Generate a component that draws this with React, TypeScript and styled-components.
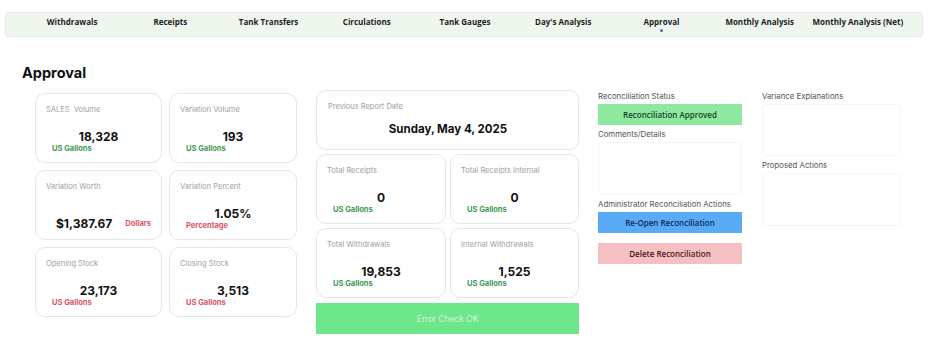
import React, { FC } from 'react'
import styled, { createGlobalStyle } from 'styled-components'

const GlobalStyle = createGlobalStyle`
  body {
    margin: 0;
    background: #fff;
    font-family: 'Inter', 'Liberation Sans', sans-serif;
  }
`

const tabs = [
  'Withdrawals',
  'Receipts',
  'Tank Transfers',
  'Circulations',
  'Tank Gauges',
  "Day's Analysis",
  'Approval',
  'Monthly Analysis',
  'Monthly Analysis (Net)',
]

type Tone = 'green' | 'red'

interface StatProps {
  label: string
  value: string
  unit: string
  tone: Tone
  inline?: boolean
}

const StatCard: FC<StatProps> = ({ label, value, unit, tone, inline }) => (
  <Card>
    <CardLabel>{label}</CardLabel>
    {inline ? (
      <InlineRow>
        <Value>{value}</Value>
        <Unit tone={tone}>{unit}</Unit>
      </InlineRow>
    ) : (
      <>
        <Value>{value}</Value>
        <Unit tone={tone}>{unit}</Unit>
      </>
    )}
  </Card>
)

const App: FC = () => {
  return (
    <Page>
      <GlobalStyle />
      <NavBar>
        {tabs.map((t) => (
          <Tab key={t} active={t === 'Approval'}>
            {t}
          </Tab>
        ))}
      </NavBar>

      <Title>Approval</Title>

      <Main>
        <LeftGrid>
          <StatCard label={'SALES\u00a0 Volume'} value="18,328" unit="US Gallons" tone="green" />
          <StatCard label="Variation Volume" value="193" unit="US Gallons" tone="green" />
          <StatCard label="Variation Worth" value="$1,387.67" unit="Dollars" tone="red" inline />
          <StatCard label="Variation Percent" value="1.05%" unit="Percentage" tone="red" />
          <StatCard label="Opening Stock" value="23,173" unit="US Gallons" tone="red" />
          <StatCard label="Closing Stock" value="3,513" unit="US Gallons" tone="red" />
        </LeftGrid>

        <MiddleCol>
          <DateCard>
            <CardLabel>Previous Report Date</CardLabel>
            <DateValue>Sunday, May 4, 2025</DateValue>
          </DateCard>
          <PairRow>
            <StatCard label="Total Receipts" value="0" unit="US Gallons" tone="green" />
            <StatCard label="Total Receipts Internal" value="0" unit="US Gallons" tone="green" />
          </PairRow>
          <PairRow>
            <StatCard label="Total Withdrawals" value="19,853" unit="US Gallons" tone="green" />
            <StatCard label="Internal Withdrawals" value="1,525" unit="US Gallons" tone="green" />
          </PairRow>
          <CheckBar>Error Check OK</CheckBar>
        </MiddleCol>

        <SideCol>
          <FieldLabel>Reconciliation Status</FieldLabel>
          <ActionBar kind="approved">Reconciliation Approved</ActionBar>
          <FieldLabel>Comments/Details</FieldLabel>
          <TextBox h={51} />
          <FieldLabel>Administrator Reconciliation Actions</FieldLabel>
          <ActionBar kind="reopen">Re-Open Reconciliation</ActionBar>
          <ActionBar kind="delete" spaced>Delete Reconciliation</ActionBar>
        </SideCol>

        <SideCol narrow>
          <FieldLabel>Variance Explanations</FieldLabel>
          <TextBox h={50} />
          <FieldLabel>Proposed Actions</FieldLabel>
          <TextBox h={51} />
        </SideCol>
      </Main>
    </Page>
  )
}

export default App

const Page = styled.div`
  width: 936px;
  height: 346px;
  padding-top: 12px;
  box-sizing: border-box;
  overflow: hidden;
`

const NavBar = styled.nav`
  margin-left: 5px;
  width: 918px;
  height: 25px;
  box-sizing: border-box;
  padding: 0 15px 0 17px;
  display: grid;
  grid-template-columns: repeat(9, 1fr);
  background: #eef6ee;
  border: 1px solid #e2ebe2;
  border-radius: 3px;
`

const Tab = styled.div<{ active?: boolean }>`
  position: relative;
  text-align: center;
  padding-top: 3px;
  font-family: 'Open Sans', 'Liberation Sans', sans-serif;
  font-weight: 700;
  font-size: 8px;
  color: #1c1c1c;
  white-space: nowrap;

  &::after {
    content: '';
    display: ${(p) => (p.active ? 'block' : 'none')};
    position: absolute;
    left: 50%;
    top: 16px;
    width: 3px;
    height: 3px;
    margin-left: -1px;
    border-radius: 50%;
    background: #5863d4;
  }
`

const Title = styled.h1`
  margin: 27px 0 0 22px;
  font-size: 14.5px;
  font-weight: 700;
  color: #111;
  line-height: 18px;
`

const Main = styled.div`
  display: flex;
  align-items: flex-start;
  margin-top: 8px;
  padding-left: 35px;
`

const LeftGrid = styled.div`
  display: grid;
  grid-template-columns: 127px 128px;
  grid-auto-rows: 70px;
  column-gap: 7px;
  row-gap: 7px;
  margin-top: 3px;
`

const Card = styled.div`
  box-sizing: border-box;
  border: 1px solid #e6e6e6;
  border-radius: 10px;
  background: #fff;
  padding: 11px 10px 0 10px;
  display: flex;
  flex-direction: column;
  height: 70px;
`

const CardLabel = styled.div`
  font-size: 7.5px;
  color: #a0a0a0;
  line-height: 10px;
  white-space: nowrap;
`

const Value = styled.div`
  margin-top: 15px;
  text-align: center;
  font-size: 12px;
  font-weight: 700;
  color: #111;
  line-height: 14px;
`

const InlineRow = styled.div`
  display: flex;
  align-items: center;
  justify-content: space-between;
  margin-top: 25px;
  padding: 0 0 0 10px;

  ${Value} {
    margin-top: 0;
  }
`

const Unit = styled.div<{ tone: Tone }>`
  font-size: 7.5px;
  font-weight: 700;
  line-height: 10px;
  color: ${(p) => (p.tone === 'green' ? '#3d9a55' : '#d95466')};
  padding-left: 6px;
`

const MiddleCol = styled.div`
  width: 263px;
  margin-left: 19px;
  display: flex;
  flex-direction: column;
  gap: 4px;
`

const DateCard = styled.div`
  box-sizing: border-box;
  height: 60px;
  border: 1px solid #e6e6e6;
  border-radius: 10px;
  padding: 11px 10px 0 11px;
`

const DateValue = styled.div`
  margin-top: 10px;
  text-align: center;
  font-size: 11.5px;
  font-weight: 700;
  color: #111;
`

const PairRow = styled.div`
  display: grid;
  grid-template-columns: 130px 129px;
  column-gap: 4px;
`

const CheckBar = styled.div`
  margin-top: 1px;
  height: 31px;
  background: #6ee68b;
  color: #e9fbec;
  font-size: 8.5px;
  font-weight: 300;
  display: flex;
  align-items: center;
  justify-content: center;
`

const SideCol = styled.div<{ narrow?: boolean }>`
  width: ${(p) => (p.narrow ? '139px' : '144px')};
  margin-left: ${(p) => (p.narrow ? '20px' : '19px')};
  margin-top: 1px;
  display: flex;
  flex-direction: column;
`

const FieldLabel = styled.div`
  font-size: 7.8px;
  color: #555;
  line-height: 10px;
  margin-bottom: 3px;
  white-space: nowrap;
`

const TextBox = styled.div<{ h: number }>`
  height: ${(p) => p.h}px;
  border: 1px solid #f6f6f7;
  border-radius: 3px;
  margin-bottom: 4px;
`

const barColors = {
  approved: { bg: '#8ee8a0', fg: '#14451f' },
  reopen: { bg: '#5aabf6', fg: '#0f2a55' },
  delete: { bg: '#f5c0c4', fg: '#4b1419' },
}

const ActionBar = styled.div<{ kind: keyof typeof barColors; spaced?: boolean }>`
  height: 21px;
  margin-top: ${(p) => (p.spaced ? '6px' : '0')};
  margin-bottom: 4px;
  background: ${(p) => barColors[p.kind].bg};
  color: ${(p) => barColors[p.kind].fg};
  font-family: 'Open Sans', 'Liberation Sans', sans-serif;
  font-weight: 600;
  font-size: 8px;
  display: flex;
  align-items: center;
  justify-content: center;
`
